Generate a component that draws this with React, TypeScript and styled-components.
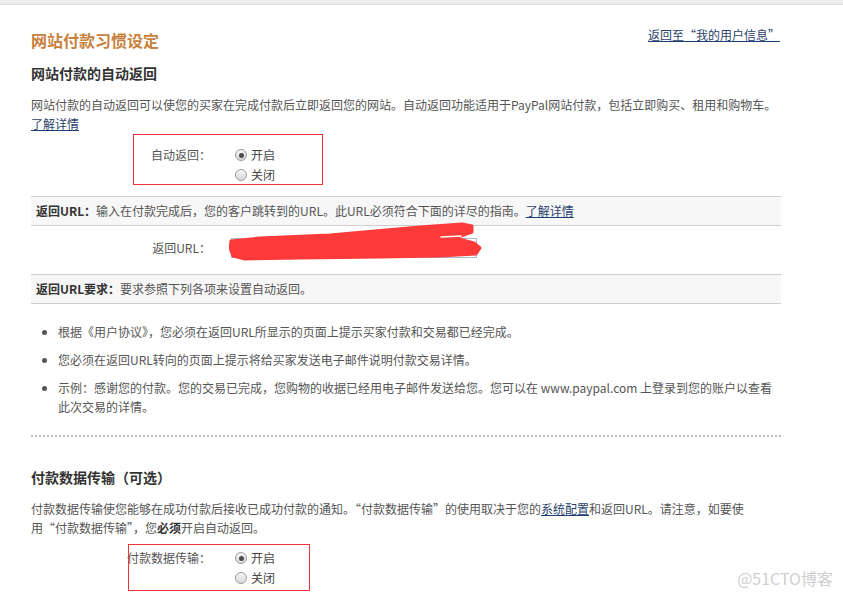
import { styled, createGlobalStyle } from "styled-components";

const GlobalStyle = createGlobalStyle`
    html, body {
        margin: 0;
        padding: 0;
        background: #fff;
        overflow: hidden;
    }
    body {
        font-family: "Noto Sans CJK SC", "Noto Sans", sans-serif;
        font-size: 12px;
        color: #555;
    }
`;

const Page = styled.div`
    position: relative;
    width: 843px;
    height: 596px;
`;

const TopBar = styled.div`
    height: 4px;
    background: #ededed;
    border-bottom: 1px solid #dcdcdc;
`;

const Content = styled.div`
    width: 750px;
    margin-left: 31px;
`;

const Header = styled.div`
    display: flex;
    justify-content: space-between;
    align-items: flex-start;
    margin-top: 24px;
`;

const Title = styled.h1`
    margin: 0;
    font-size: 16px;
    line-height: 22px;
    font-weight: bold;
    color: #c8813c;
`;

const Link = styled.a`
    color: #2a3f6c;
    text-decoration: underline;
    text-decoration-color: #1d3f78;
    cursor: pointer;
`;

const BackLink = styled(Link)`
    margin-top: -3px;
    line-height: 18px;
    padding-right: 1px;
`;

const SubTitle = styled.h2<{ $gap: number }>`
    margin: ${(p) => p.$gap}px 0 0;
    font-size: 14px;
    line-height: 20px;
    font-weight: bold;
    color: #333;
`;

const Para = styled.p`
    margin: 12px 0 0;
    line-height: 19px;
    b {
        color: #333;
    }
`;

const FormRow = styled.div<{ $gap: number }>`
    position: relative;
    display: grid;
    grid-template-columns: 180px 1fr;
    column-gap: 20px;
    margin-top: ${(p) => p.$gap}px;
`;

const Label = styled.div`
    text-align: right;
    line-height: 20px;
    white-space: nowrap;
    color: #555;
`;

const RadioGroup = styled.div`
    display: flex;
    flex-direction: column;
    padding-left: 4px;
`;

const RadioOption = styled.label`
    display: flex;
    align-items: center;
    gap: 4px;
    line-height: 20px;
    color: #444;
`;

const RadioDot = styled.span<{ $checked?: boolean }>`
    display: flex;
    align-items: center;
    justify-content: center;
    width: 12px;
    height: 12px;
    box-sizing: border-box;
    border-radius: 50%;
    border: 1px solid #9c9c9c;
    background: linear-gradient(#f6f6f6, #d9d9d9);

    &::after {
        content: "";
        display: ${(p) => (p.$checked ? "block" : "none")};
        width: 5px;
        height: 5px;
        border-radius: 50%;
        background: #4a4a4a;
    }
`;

const Annotation = styled.div<{ $top: number; $left: number; $w: number; $h: number }>`
    position: absolute;
    top: ${(p) => p.$top}px;
    left: ${(p) => p.$left}px;
    width: ${(p) => p.$w}px;
    height: ${(p) => p.$h}px;
    box-sizing: border-box;
    border: 1px solid #f0343a;
    pointer-events: none;
`;

const InfoBar = styled.div<{ $gap: number }>`
    margin-top: ${(p) => p.$gap}px;
    padding-left: 5px;
    line-height: 28px;
    background: #f7f7f7;
    border-top: 1px solid #cfcfcf;
    border-bottom: 1px solid #cfcfcf;
    color: #555;
    b {
        color: #333;
    }
`;

const InputWrap = styled.div`
    position: relative;
    width: 246px;
    height: 20px;
`;

const TextInput = styled.input`
    width: 246px;
    height: 20px;
    box-sizing: border-box;
    border: 1px solid #a8bcd4;
    padding: 0 4px;
    margin: 0;
    font: inherit;
    outline: none;
`;

const Scribble = styled.svg`
    position: absolute;
    left: -2px;
    top: -16px;
    pointer-events: none;
`;

const List = styled.ul`
    margin: 18px 0 0;
    padding-left: 27px;
    line-height: 19px;
    li {
        margin-bottom: 9px;
    }
    li:last-child {
        margin-bottom: 0;
    }
`;

const Divider = styled.hr`
    margin: 19px 0 0;
    border: none;
    border-top: 2px dotted #bdbdbd;
`;

const Watermark = styled.div`
    position: absolute;
    right: 10px;
    bottom: 8px;
    font-size: 16px;
    line-height: 20px;
    color: #cfcfcf;
`;

const Radios = ({ name }: { name: string }) => (
    <RadioGroup>
        <RadioOption>
            <RadioDot $checked />
            开启
        </RadioOption>
        <RadioOption>
            <RadioDot />
            关闭
        </RadioOption>
    </RadioGroup>
);

const App = () => {
    return (
        <Page>
            <GlobalStyle />
            <TopBar />
            <Content>
                <Header>
                    <Title>网站付款习惯设定</Title>
                    <BackLink>返回至“我的用户信息”</BackLink>
                </Header>

                <SubTitle $gap={12}>网站付款的自动返回</SubTitle>
                <Para>
                    网站付款的自动返回可以使您的买家在完成付款后立即返回您的网站。自动返回功能适用于PayPal网站付款，包括立即购买、租用和购物车。
                    <br />
                    <Link>了解详情</Link>
                </Para>

                <FormRow $gap={12}>
                    <Label>自动返回：</Label>
                    <Radios name="auto" />
                    <Annotation $top={-11} $left={102} $w={190} $h={51} />
                </FormRow>

                <InfoBar $gap={11}>
                    <b>返回URL：</b>输入在付款完成后，您的客户跳转到的URL。此URL必须符合下面的详尽的指南。<Link>了解详情</Link>
                </InfoBar>

                <FormRow $gap={12}>
                    <Label>返回URL：</Label>
                    <InputWrap>
                        <TextInput defaultValue="" />
                        <Scribble width="256" height="40" viewBox="0 0 256 40">
                            <path
                                d="M2 19 L31 16 L101 13 L191 5 L233 2 L243 4 L243 10 L226 16 L245 21 L251 26 L247 32 L211 34 L151 35 L71 36 L16 37 L4 34 L1 26 Z"
                                fill="#fd3a3a"
                                stroke="#fd3a3a"
                                strokeWidth="3"
                                strokeLinejoin="round"
                            />
                            <path d="M212 15 L232 14" stroke="#fff" strokeWidth="1.5" strokeLinecap="round" />
                        </Scribble>
                    </InputWrap>
                </FormRow>

                <InfoBar $gap={16}>
                    <b>返回URL要求：</b>要求参照下列各项来设置自动返回。
                </InfoBar>

                <List>
                    <li>根据《用户协议》，您必须在返回URL所显示的页面上提示买家付款和交易都已经完成。</li>
                    <li>您必须在返回URL转向的页面上提示将给买家发送电子邮件说明付款交易详情。</li>
                    <li>
                        示例：感谢您的付款。您的交易已完成，您购物的收据已经用电子邮件发送给您。您可以在 www.paypal.com 上登录到您的账户以查看
                        <br />
                        此次交易的详情。
                    </li>
                </List>

                <Divider />

                <SubTitle $gap={30}>付款数据传输（可选）</SubTitle>
                <Para>
                    付款数据传输使您能够在成功付款后接收已成功付款的通知。“付款数据传输”的使用取决于您的<Link>系统配置</Link>和返回URL。请注意，如要使
                    <br />
                    用“付款数据传输”，您<b>必须</b>开启自动返回。
                </Para>

                <FormRow $gap={11}>
                    <Label>付款数据传输：</Label>
                    <Radios name="pdt" />
                    <Annotation $top={-4} $left={97} $w={182} $h={47} />
                </FormRow>
            </Content>
            <Watermark>@51CTO博客</Watermark>
        </Page>
    );
};

export default App;
